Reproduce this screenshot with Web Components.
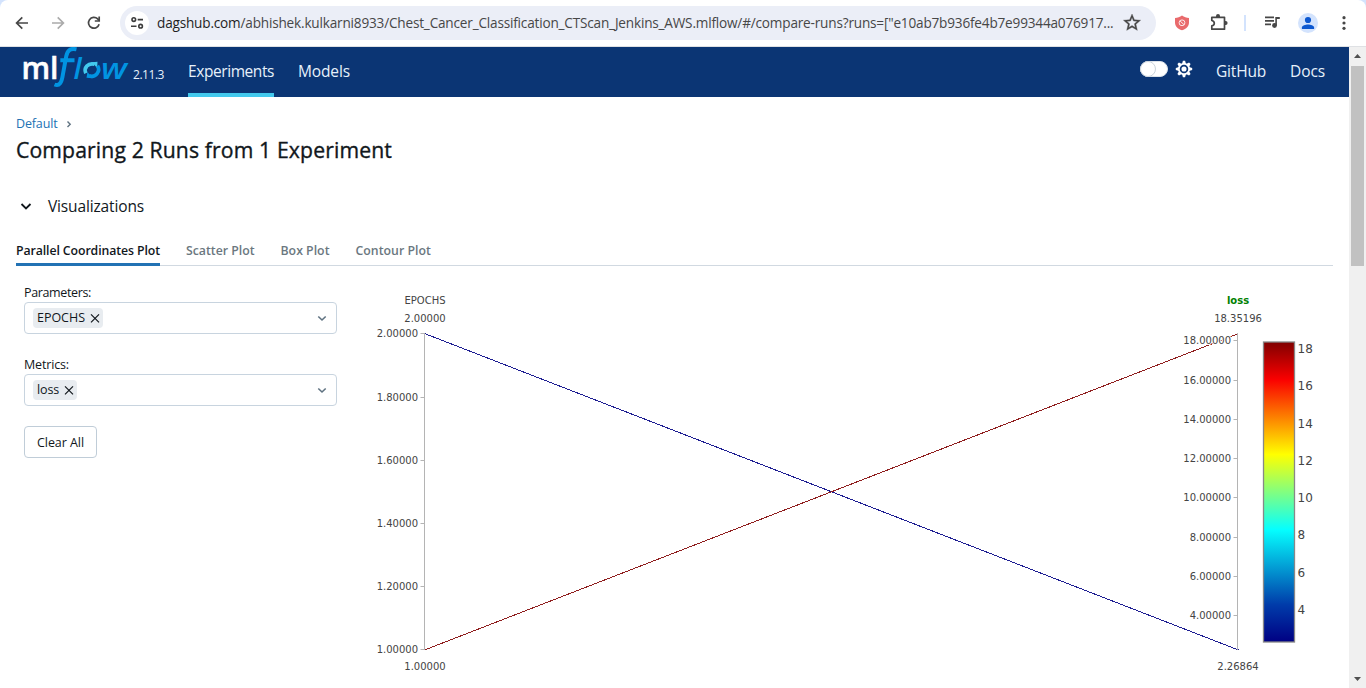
<!DOCTYPE html>
<html lang="en">
<head>
<meta charset="utf-8">
<title>MLflow - Comparing Runs</title>
<style>
html,body{margin:0;height:100%;overflow:hidden;background:#fff}
body{font-family:"Open Sans","Noto Sans",sans-serif;color:#11171c}
</style>
</head>
<body>
<app-window></app-window>
<script>
const define = (name, html, setup) => {
  const template = document.createElement('template');
  template.innerHTML = html;
  customElements.define(name, class extends HTMLElement {
    connectedCallback() {
      if (this.shadowRoot) return;
      this.attachShadow({mode: 'open'}).appendChild(template.content.cloneNode(true));
      if (setup) setup.call(this, this.shadowRoot);
    }
  });
};

/* A single line of text whose tracking is adjusted to a given advance width. */
define('fit-text', `<style>:host{display:block;white-space:nowrap;flex:none}span{display:inline-block}</style><span><slot></slot></span>`, function (root) {
  const width = parseFloat(this.getAttribute('w'));
  const span = root.querySelector('span');
  this.style.width = width + 'px';
  const natural = span.getBoundingClientRect().width;
  span.style.letterSpacing = (width - natural) / this.textContent.length + 'px';
});

define('address-bar', `<style>
:host{display:flex;align-items:center;box-sizing:border-box;width:1036px;height:34px;border-radius:17px;background:#ebeef7;padding:0 15px 0 5px;flex:none}
.site{width:24px;height:24px;border-radius:50%;background:#fff;margin-right:8px;flex:none}
.site svg,.star{display:block}
fit-text{font-size:13.6px;line-height:20px;color:#474747}
b{font-weight:400;color:#1f1f1f}
.star{margin-left:auto}
</style>
<div class="site"><svg width="24" height="24" fill="none" stroke="#3c3c3c" stroke-width="1.6"><circle cx="8.8" cy="8.6" r="1.8"/><path d="M12.7 8.6H18M6 15.2H11.5"/><circle cx="15.6" cy="15.2" r="1.8"/></svg></div>
<fit-text w="956.500"><b>dagshub.com</b>/abhishek.kulkarni8933/Chest_Cancer_Classification_CTScan_Jenkins_AWS.mlflow/#/compare-runs?runs=["e10ab7b936fe4b7e99344a076917...</fit-text>
<svg class="star" width="18" height="18" viewBox="3 3 18 18"><path fill="#474747" stroke="#474747" stroke-width=".4" d="M22 9.24l-7.19-.62L12 2 9.19 8.63 2 9.24l5.46 4.73L5.82 21 12 17.27 18.18 21l-1.63-7.03L22 9.24zM12 15.4l-3.76 2.27 1-4.28-3.32-2.88 4.38-.38L12 6.1l1.71 4.04 4.38.38-3.32 2.88 1 4.28L12 15.4z" transform="translate(1.700 1.300) scale(.86)"/></svg>`);

define('browser-toolbar', `<style>
:host{display:block;height:47px;background:#d3e3fd}
.bar{box-sizing:border-box;height:47px;background:#fff;border-bottom:1px solid #dfe1e4;border-radius:8px 8px 0 0;display:flex;align-items:flex-start;padding-top:6px}
svg{display:block;flex:none}
</style>
<div class="bar">
<svg width="120" height="34" fill="none" stroke="#474747" stroke-width="1.7"><path d="M28 17H17M22.3 11.3L16.6 17l5.7 5.7"/><path stroke="#ababab" d="M52 17H63M57.7 11.3L63.4 17l-5.7 5.7"/><path d="M99.1 18.2A5.4 5.4 0 1 1 97.7 12.9L99 14.4"/><path d="M99.2 10.6V15H94.8"/></svg>
<address-bar></address-bar>
<svg width="210" height="34">
<path fill="#e96a6c" d="M26 9.5c2.2 1.7 4.5 2.4 7 2.6v4.3c0 3.6-2.6 6.3-7 7.9-4.400-1.600-7-4.300-7-7.900v-4.300c2.500-.200 4.800-.900 7-2.600z"/>
<g fill="none" stroke="#fff" stroke-width="1" opacity=".85"><circle cx="26" cy="16.8" r="2.9"/><path d="M24 14.900L28 18.700"/></g>
<path fill="none" stroke="#474747" stroke-width="1.700" stroke-linejoin="round" d="M55.800 11.300H68.500V23.200H55.800V19.900Q58.300 19.300 58.300 17.200T55.800 14.500Z"/>
<path fill="#474747" d="M60 11V10a2 2 0 0 1 4 0v1zM69 15h.600a2 2 0 0 1 0 4H69z"/>
<path fill="#d3e3fd" d="M88 9h2v16h-2z"/>
<path fill="#474747" d="M109 10.500h9v1.700h-9zM109 14h9v1.700h-9zM109 17.500h6v1.700h-6z"/>
<circle cx="118.500" cy="19.500" r="2.400" fill="#474747"/><path fill="#474747" d="M119.300 11h4.500v2h-2.900v6.500h-1.600z"/>
<circle cx="152" cy="17" r="10" fill="#d3e3fd"/><circle cx="152" cy="14" r="3.100" fill="#0b57d0"/><path fill="#0b57d0" d="M145.900 23v-1.500c0-2 3.600-3 6.100-3s6.100 1 6.100 3V23z"/>
<g fill="#474747"><circle cx="188" cy="11.700" r="1.600"/><circle cx="188" cy="17" r="1.600"/><circle cx="188" cy="22.300" r="1.600"/></g>
</svg></div>`);

define('mlflow-logo', `<style>:host{display:block;flex:none;width:110px;height:46px}svg{display:block;overflow:visible}</style>
<svg width="110" height="46" font-family="Open Sans,sans-serif">
<text x="-1.500" y="31.500" font-size="30" font-weight="600" fill="#fff" stroke="#fff" stroke-width=".5" textLength="37" lengthAdjust="spacingAndGlyphs">ml</text>
<g fill="#0194e2" font-style="italic">
<text x="50.500" y="31.500" font-size="29.500" font-weight="600">l</text>
<text x="78" y="31.500" font-size="29" font-weight="600" textLength="26" lengthAdjust="spacingAndGlyphs">w</text></g>
<path fill="none" stroke="#0194e2" stroke-width="4" d="M53.500 2.300C47 .800 44.500 3.500 43.300 9L39.800 28C38.700 35.500 36.500 39.500 31.500 37.500M37.300 13.200H51.500"/>
<path fill="none" stroke="#43c9ed" stroke-width="3.700" d="M62.800 26.200C60.500 21 65 15.500 71.500 17.200"/>
<path fill="#43c9ed" d="M69 15.300l5.500-.5-.4 6.200z"/>
<path fill="none" stroke="#0194e2" stroke-width="3.700" d="M74.500 18.800C77.800 24 73 31.200 66 28.800"/>
<path fill="#0194e2" d="M69.500 31.200L63.500 30.800 64.500 25z"/>
</svg>`);

define('nav-bar', `<style>
:host{display:flex;height:50px;background:#0b3574;box-sizing:border-box;padding-left:23px;color:#e7f1fb;font-size:15.500px}
.v{font-size:12px;line-height:18px;margin:19px 24px 0 0}
.tab{height:50px;box-sizing:border-box;padding-top:13px;line-height:22px;margin-right:24px}
.on{border-bottom:4px solid #43c9ed}
.right{margin-left:auto;display:flex}
svg{display:block;margin-right:22px}
</style>
<mlflow-logo></mlflow-logo>
<fit-text class="v" w="31">2.11.3</fit-text>
<div class="tab on"><fit-text w="86">Experiments</fit-text></div>
<div class="tab"><fit-text w="52">Models</fit-text></div>
<div class="right">
<svg width="54" height="50"><rect x="0.500" y="14.500" width="27" height="15" rx="7.500" fill="#fff" stroke="#dce3ea"/><circle cx="8" cy="22" r="7.500" fill="#fff" stroke="#cbd4dc"/>
<g transform="translate(44 22)"><g fill="#fff"><circle r="6"/><path d="M-2-5L-1.100-8.200H1.100L2-5zM-2 5L-1.100 8.200H1.100L2 5z"/><path transform="rotate(45)" d="M-2-5L-1.100-8.200H1.100L2-5zM-2 5L-1.100 8.200H1.100L2 5z"/><path transform="rotate(90)" d="M-2-5L-1.100-8.200H1.100L2-5zM-2 5L-1.100 8.200H1.100L2 5z"/><path transform="rotate(135)" d="M-2-5L-1.100-8.200H1.100L2-5zM-2 5L-1.100 8.200H1.100L2 5z"/></g><circle r="3.400" fill="none" stroke="#0b3574" stroke-width="1.700"/></g></svg>
<div class="tab"><fit-text w="50">GitHub</fit-text></div>
<div class="tab"><fit-text w="35">Docs</fit-text></div>
</div>`);

define('page-header', `<style>
:host{display:block;padding:17px 16px 0;height:152px;box-sizing:border-box}
.crumb{display:flex;height:20px;line-height:20px;font-size:12.500px;color:#2272b4}
.crumb svg{margin:4px 0 0 6px}
.title{font-size:21.200px;font-weight:500;line-height:28px;margin-top:2px;-webkit-text-stroke:.35px #11171c}
.section{display:flex;align-items:center;font-size:15.500px;line-height:24px;margin-top:30px;padding-left:4px}
.section svg{margin-right:16px}
</style>
<div class="crumb"><fit-text w="41.500">Default</fit-text><svg width="10" height="12" fill="none" stroke="#5f7281" stroke-width="1.400"><path d="M3.500 3.500l2.700 2.700-2.700 2.700"/></svg></div>
<fit-text class="title" w="376">Comparing 2 Runs from 1 Experiment</fit-text>
<div class="section"><svg width="12" height="12" fill="none" stroke="#11171c" stroke-width="1.800"><path d="M1.500 4l4.500 4.500L10.500 4"/></svg><fit-text w="96">Visualizations</fit-text></div>`);

define('tab-strip', `<style>
:host{display:flex;margin:-9px 16px 0;height:26px;border-bottom:1px solid #d1d9e1;font-size:12.300px;font-weight:600;line-height:22px;color:#6b7780;box-sizing:border-box;gap:26px}
.on{color:#11171c;height:26px;box-sizing:border-box;border-bottom:3px solid #2272b4}
</style>
<div class="on"><fit-text w="144">Parallel Coordinates Plot</fit-text></div><fit-text w="68.500">Scatter Plot</fit-text><fit-text w="49">Box Plot</fit-text><fit-text w="75.500">Contour Plot</fit-text>`);

define('tag-select', `<style>
:host{display:block;height:72px}
.label{font-size:12.500px;line-height:20px;height:19px}
.box{box-sizing:border-box;width:313px;height:32px;border:1px solid #c8d4df;border-radius:4px;display:flex;align-items:center;justify-content:space-between;padding:0 8px;font-size:12.500px}
.tag{height:20px;line-height:20px;background:#e8ecf0;border-radius:4px;display:flex;padding:0 3px 0 4px;align-items:center;gap:4px}
svg{display:block}
</style>
<div class="label"><slot name="label"></slot></div>
<div class="box"><div class="tag"><slot name="value"></slot><svg width="11" height="12" fill="none" stroke="#11171c" stroke-width="1.200"><path d="M2 2.300l8 8M10 2.300l-8 8"/></svg></div>
<svg width="12" height="12" fill="none" stroke="#5f7281" stroke-width="1.600"><path d="M2.300 4.500L6 8l3.700-3.500"/></svg></div>`);

define('plot-controls', `<style>
:host{display:block;width:352px;padding:17px 0 0 24px;box-sizing:border-box;flex:none}
button{display:flex;justify-content:center;align-items:center;box-sizing:border-box;width:73px;height:32px;background:#fff;border:1px solid #c0cdd8;border-radius:4px;padding:0;margin:-1px 0 0;font:12.500px "Open Sans",sans-serif;color:#11171c}
</style>
<tag-select><fit-text slot="label" w="67">Parameters:</fit-text><fit-text slot="value" w="48">EPOCHS</fit-text></tag-select>
<tag-select><fit-text slot="label" w="45">Metrics:</fit-text><fit-text slot="value" w="22">loss</fit-text></tag-select>
<button><fit-text w="47">Clear All</fit-text></button>`);

define('parallel-plot', `<style>:host{display:block;flex:none;width:997px;height:422px}svg{display:block}
text{font-family:"DejaVu Sans",Verdana,sans-serif;fill:#444}
.t{font-size:10px;paint-order:stroke;stroke:#fff;stroke-width:2px}.c{font-size:12px}</style>
<svg width="997" height="422" viewBox="352 266 997 422">
<defs><linearGradient id="jet" x1="0" y1="1" x2="0" y2="0"><stop stop-color="#000083"/><stop offset=".125" stop-color="#003caa"/><stop offset=".375" stop-color="#05ffff"/><stop offset=".625" stop-color="#ff0"/><stop offset=".875" stop-color="#fa0000"/><stop offset="1" stop-color="#800000"/></linearGradient></defs>
<g fill="none" stroke-width="1" shape-rendering="crispEdges" opacity=".88"><path stroke="#000083" d="M424.500 333.500L1238.500 650"/><path stroke="#800000" d="M424.500 650L1238.500 333.500"/></g>
<g id="axes"></g>
<rect x="1263.500" y="342" width="31" height="300" fill="url(#jet)" stroke="#888" stroke-width="1.300"/>
</svg>`, function (root) {
  const g = root.getElementById('axes');
  const add = (tag, attrs, text) => {
    const el = document.createElementNS('http://www.w3.org/2000/svg', tag);
    for (const k in attrs) el.setAttribute(k, attrs[k]);
    if (text) el.textContent = text;
    g.appendChild(el);
  };
  const axis = (x, lo, hi, ticks) => {
    add('path', {d: `M${x} 333V650`, stroke: '#b4b4b4'});
    for (const v of ticks) {
      const y = 333.5 + (hi - v) / (hi - lo) * 316;
      add('path', {d: `M${x - 4} ${Math.floor(y + .3) + .5}h4`, stroke: '#b4b4b4'});
      add('text', {class: 't', x: x - 6.5, y: Math.round(y + 3.9), 'text-anchor': 'end'}, v.toFixed(5));
    }
    add('text', {class: 't', x: x + .5, y: 322, 'text-anchor': 'middle'}, hi.toFixed(5));
    add('text', {class: 't', x: x + .5, y: 670, 'text-anchor': 'middle'}, lo.toFixed(5));
  };
  axis(424.5, 1, 2, [2, 1.8, 1.6, 1.4, 1.2, 1]);
  axis(1237.5, 2.26864, 18.35196, [18, 16, 14, 12, 10, 8, 6, 4]);
  add('text', {class: 't', x: 425, y: 304, 'text-anchor': 'middle'}, 'EPOCHS');
  add('text', {class: 't', x: 1238, y: 304, 'text-anchor': 'middle', style: 'fill:green;font-weight:bold'}, 'loss');
  for (let v = 18; v >= 4; v -= 2) add('text', {class: 'c', x: 1297.5, y: Math.round(353 + (18 - v) * 18.64)}, String(v));
});

define('scroll-bar', `<style>:host{display:flex;flex-direction:column;align-items:center;justify-content:space-between;width:17px;background:#f0f0f0;flex:none}
svg{display:block}.track{flex:1;padding-top:2px}.thumb{width:13px;height:200px;background:#c1c1c1}</style>
<svg width="17" height="17"><path fill="#505050" d="M5 11l3.500-4L12 11z"/></svg><div class="track"><div class="thumb"></div></div><svg width="17" height="17"><path fill="#505050" d="M5 6l3.500 4L12 6z"/></svg>`);

define('app-window', `<style>:host{display:flex;flex-direction:column;width:1366px;height:688px;overflow:hidden}
.body{display:flex;height:641px}main{width:1349px;background:#fff;overflow:hidden}.plots{display:flex}</style>
<browser-toolbar></browser-toolbar>
<div class="body"><main><nav-bar></nav-bar><page-header></page-header><tab-strip></tab-strip><div class="plots"><plot-controls></plot-controls><parallel-plot></parallel-plot></div></main><scroll-bar></scroll-bar></div>`);
</script>
</body>
</html>
